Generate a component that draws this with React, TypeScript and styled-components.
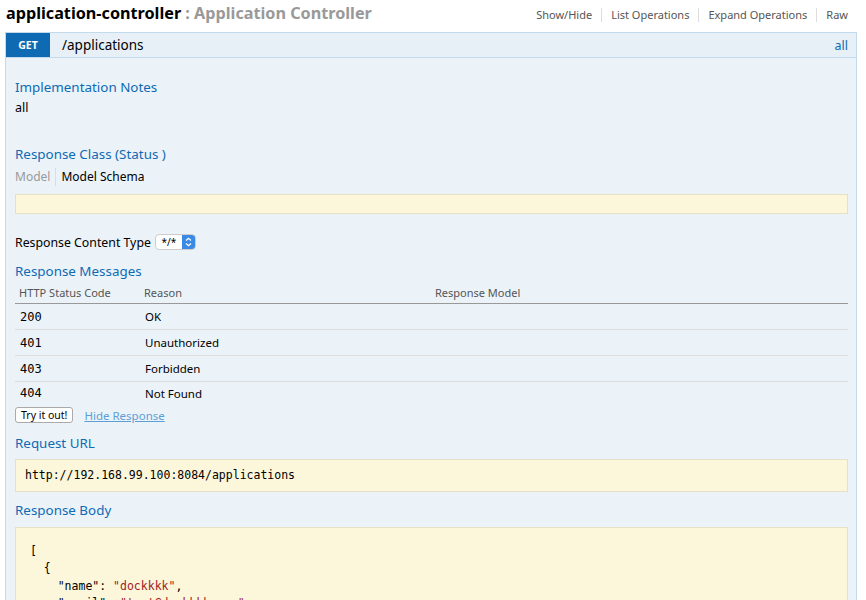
import { FC } from 'react'
import styled, { createGlobalStyle } from 'styled-components'

const GlobalStyle = createGlobalStyle`
  body {
    margin: 0;
    background: #fff;
    font-family: 'Noto Sans', 'Open Sans', sans-serif;
    color: #000;
  }
`

const Page = styled.div`
  width: 866px;
  height: 600px;
  overflow: hidden;
`

const Header = styled.div`
  display: flex;
  align-items: center;
  height: 30px;
  padding: 0 18px 0 6px;
`

const Title = styled.h2`
  margin: -4px 0 0;
  flex: 1;
  font-size: 16.2px;
  font-weight: 700;
  color: #000;
`

const Subtitle = styled.span`
  color: #999;
`

const HeaderLinks = styled.ul`
  display: flex;
  list-style: none;
  margin: 0;
  padding: 0;
`

const HeaderLink = styled.li<{ $first?: boolean }>`
  font-size: 11px;
  color: #555;
  padding: 0 9px;
  line-height: 14px;
  border-left: ${p => (p.$first ? 'none' : '1px solid #ddd')};
  &:last-child {
    padding-right: 0;
  }
`

const Operation = styled.div`
  margin: 2px 9px 0 5px;
`

const OpHeading = styled.div`
  display: flex;
  align-items: center;
  height: 24px;
  background: #e7f0f7;
  border: 1px solid #c3d9ec;
`

const Method = styled.span`
  display: flex;
  align-items: center;
  justify-content: center;
  width: 44px;
  height: 100%;
  background: #0f6ab4;
  color: #fff;
  font-size: 10.5px;
  font-weight: 700;
`

const Path = styled.span`
  flex: 1;
  margin-left: 12px;
  font-size: 13.5px;
`

const OpOptions = styled.span`
  font-size: 12.5px;
  color: #0f6ab4;
  padding-right: 8px;
`

const Content = styled.div`
  display: flow-root;
  background: #ebf3f9;
  border: 1px solid #c3d9ec;
  border-top: none;
  padding: 0 8px 0 9px;
  height: 600px;
`

const SectionTitle = styled.h4<{ $top: number }>`
  margin: ${p => p.$top}px 0 0;
  font-size: 13.4px;
  font-weight: 400;
  line-height: 20px;
  color: #0f6ab4;
`

const Markdown = styled.p`
  margin: 2px 0 0;
  font-size: 12.5px;
  line-height: 18px;
`

const SignatureTabs = styled.div`
  display: flex;
  margin-top: 4px;
  font-size: 12px;
  line-height: 18px;
`

const Tab = styled.span<{ $active?: boolean }>`
  color: ${p => (p.$active ? '#000' : '#999')};
  padding: 0 5px 0 0;
  & + & {
    border-left: 1px solid #ddd;
    padding-left: 5px;
  }
`

const Snippet = styled.div<{ $top: number; $height?: number }>`
  margin-top: ${p => p.$top}px;
  background: #fcf6db;
  border: 1px solid #e5e0c6;
  min-height: ${p => p.$height ?? 18}px;
  box-sizing: border-box;
`

const ContentTypeRow = styled.div`
  display: flex;
  align-items: center;
  margin-top: 18px;
  height: 20px;
  font-size: 12.3px;
  gap: 4px;
`

const Select = styled.span`
  display: inline-flex;
  align-items: center;
  width: 41px;
  height: 16px;
  box-sizing: border-box;
  background: #fff;
  border: 1px solid #ccc;
  border-radius: 4px;
  overflow: hidden;
  font-size: 10px;
`

const SelectValue = styled.span`
  flex: 1;
  text-align: center;
`

const SelectArrows = styled.span`
  display: flex;
  align-items: center;
  justify-content: center;
  width: 13px;
  height: 100%;
  background: #3b89e6;
`

const Table = styled.table`
  width: 100%;
  border-collapse: collapse;
  margin-top: 1px;
`

const Th = styled.th`
  text-align: left;
  font-weight: 400;
  font-size: 11px;
  color: #555;
  height: 21px;
  padding: 0 4px;
  border-bottom: 1px solid #999;
`

const Td = styled.td<{ $mono?: boolean }>`
  height: 25px;
  padding: 0 5px;
  font-size: ${p => (p.$mono ? '12px' : '11.5px')};
  font-family: ${p => (p.$mono ? "'DejaVu Sans Mono', monospace" : 'inherit')};
  border-bottom: 1px solid #ddd;
  tr:last-child > & {
    border-bottom: none;
    height: 22px;
  }
`

const SubmitRow = styled.div`
  display: flex;
  align-items: center;
  gap: 11px;
  margin-top: 3px;
`

const TryButton = styled.button`
  font-family: inherit;
  font-size: 10.5px;
  height: 16px;
  padding: 0 5px;
  background: #fff;
  border: 1px solid #aaa;
  border-radius: 3px;
  line-height: 12px;
`

const HideLink = styled.a`
  font-size: 11.5px;
  color: #5b9fd6;
  text-decoration: underline;
`

const Code = styled.pre`
  margin: 0;
  font-family: 'DejaVu Sans Mono', monospace;
  font-size: 11.5px;
  line-height: 17.5px;
`

const UrlCode = styled(Code)`
  padding: 7px 9px 6px;
`

const BodyCode = styled(Code)`
  padding: 15px 14px;
`

const Str = styled.span`
  color: #a11d1d;
`

const ArrowsIcon: FC = () => (
  <svg width="7" height="10" viewBox="0 0 7 10" fill="none" stroke="#fff" strokeWidth="1.3">
    <path d="M1 3.6 L3.5 1.3 L6 3.6" />
    <path d="M1 6.4 L3.5 8.7 L6 6.4" />
  </svg>
)

const messages = [
  { code: '200', reason: 'OK' },
  { code: '401', reason: 'Unauthorized' },
  { code: '403', reason: 'Forbidden' },
  { code: '404', reason: 'Not Found' },
]

export default function App() {
  return (
    <Page>
      <GlobalStyle />
      <Header>
        <Title>
          application-controller <Subtitle>: Application Controller</Subtitle>
        </Title>
        <HeaderLinks>
          <HeaderLink $first>Show/Hide</HeaderLink>
          <HeaderLink>List Operations</HeaderLink>
          <HeaderLink>Expand Operations</HeaderLink>
          <HeaderLink>Raw</HeaderLink>
        </HeaderLinks>
      </Header>
      <Operation>
        <OpHeading>
          <Method>GET</Method>
          <Path>/applications</Path>
          <OpOptions>all</OpOptions>
        </OpHeading>
        <Content>
          <SectionTitle $top={19}>Implementation Notes</SectionTitle>
          <Markdown>all</Markdown>
          <SectionTitle $top={27}>Response Class (Status )</SectionTitle>
          <SignatureTabs>
            <Tab>Model</Tab>
            <Tab $active>Model Schema</Tab>
          </SignatureTabs>
          <Snippet $top={8} $height={20} />
          <ContentTypeRow>
            Response Content Type
            <Select>
              <SelectValue>*/*</SelectValue>
              <SelectArrows>
                <ArrowsIcon />
              </SelectArrows>
            </Select>
          </ContentTypeRow>
          <SectionTitle $top={9}>Response Messages</SectionTitle>
          <Table>
            <thead>
              <tr>
                <Th style={{ width: 117 }}>HTTP Status Code</Th>
                <Th style={{ width: 283 }}>Reason</Th>
                <Th>Response Model</Th>
              </tr>
            </thead>
            <tbody>
              {messages.map(m => (
                <tr key={m.code}>
                  <Td $mono>{m.code}</Td>
                  <Td>{m.reason}</Td>
                  <Td />
                </tr>
              ))}
            </tbody>
          </Table>
          <SubmitRow>
            <TryButton>Try it out!</TryButton>
            <HideLink>Hide Response</HideLink>
          </SubmitRow>
          <SectionTitle $top={10}>Request URL</SectionTitle>
          <Snippet $top={6}>
            <UrlCode>http://192.168.99.100:8084/applications</UrlCode>
          </Snippet>
          <SectionTitle $top={8}>Response Body</SectionTitle>
          <Snippet $top={7}>
            <BodyCode>
              {'[\n  {\n    "name": '}
              <Str>"dockkkk"</Str>
              {',\n    "email": '}
              <Str>"test@dockkkk.com"</Str>
              {',\n  }\n]'}
            </BodyCode>
          </Snippet>
        </Content>
      </Operation>
    </Page>
  )
}
